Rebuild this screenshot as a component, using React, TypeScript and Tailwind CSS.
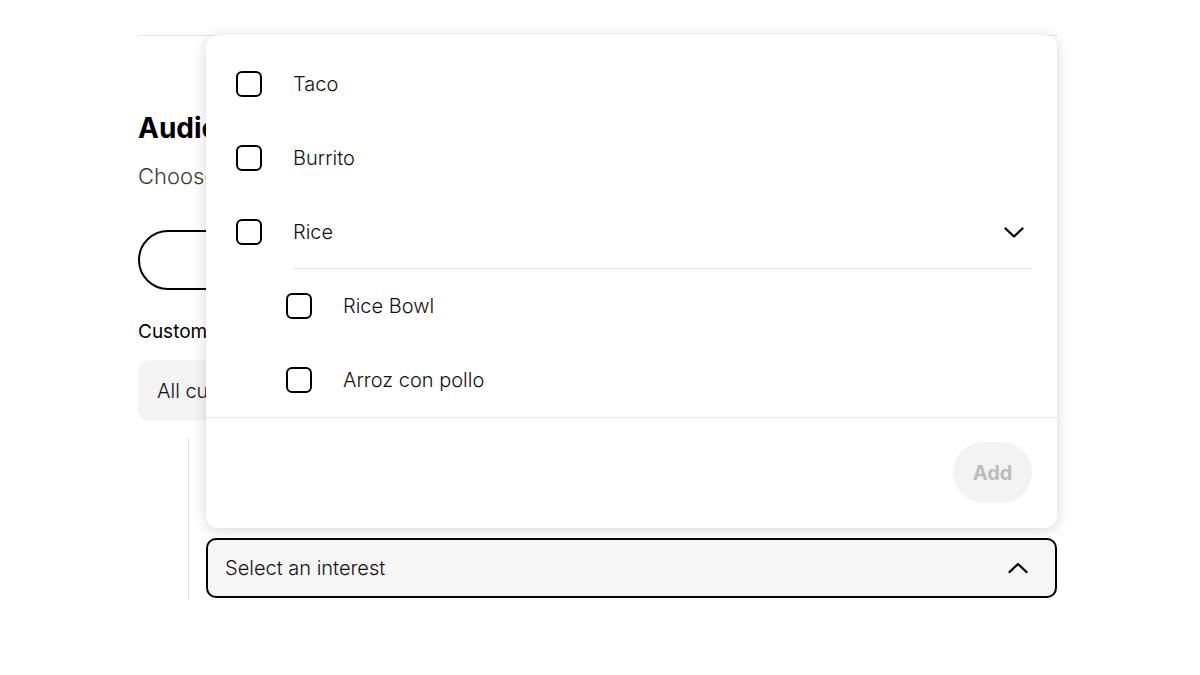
import React from "react";

function Box({ className = "" }: { className?: string }) {
  return <span className={"block w-[26px] h-[26px] rounded-[6px] border-[2.5px] border-black bg-white shrink-0 " + className} />;
}

function ChevronDown() {
  return (
    <svg width="24" height="24" viewBox="0 0 24 24" fill="none" stroke="black" strokeWidth="2.3" strokeLinecap="round" strokeLinejoin="round">
      <path d="M3.5 8.5l8.5 8 8.5-8" />
    </svg>
  );
}

function ChevronUp() {
  return (
    <svg width="24" height="24" viewBox="0 0 24 24" fill="none" stroke="black" strokeWidth="2.3" strokeLinecap="round" strokeLinejoin="round">
      <path d="M3.5 16l8.5-8 8.5 8" />
    </svg>
  );
}

function Row({ label, indent = false, chevron = false, divider = false }: { label: string; indent?: boolean; chevron?: boolean; divider?: boolean }) {
  return (
    <div className={"flex items-center h-[74px] " + (indent ? "pl-[80px]" : "pl-[30px]")}>
      <Box />
      <div className={"flex items-center h-full flex-1 ml-[31px] mr-[25px] " + (divider ? "border-b border-[#e4e4e4]" : "")}>
        <span className="text-[20px] font-light text-[#111] flex-1">{label}</span>
        {chevron && (
          <span className="mr-[6px] mt-[1px]"><ChevronDown /></span>
        )}
      </div>
    </div>
  );
}

export default function App() {
  return (
    <div className="min-h-[675px] bg-white" style={{ fontFamily: "Inter, 'Noto Sans', sans-serif" }}>
      <div className="ml-[138px] w-[919px] pt-[35px]">
        <div className="border-t border-[#e6e6e6]" />
        <h1 className="mt-[74px] text-[28px] leading-[36px] font-bold text-black">Audience</h1>
        <p className="mt-[16px] text-[22px] leading-[28px] font-light text-[#3a3a3a]">Choose who will see this campaign</p>
        <button className="mt-[40px] w-full h-[60px] rounded-full border-2 border-black bg-white text-[18px] font-semibold">Add audience</button>
        <div className="mt-[30px] text-[19px] leading-[24px] font-normal text-black">Customers</div>
        <div className="mt-[16px] h-[61px] rounded-xl bg-[#f4f4f4] flex items-center px-[19px] text-[20px] font-light text-[#111]">All customers</div>
        <div className="mt-[17px] ml-[50px] border-l border-[#e2e2e2] pl-[17px] h-[162px] flex flex-col justify-end pb-[2px]">
          <div className="relative">
            <div className="absolute left-0 right-0 bottom-full mb-[10px] bg-white rounded-[12px] shadow-[0_2px_14px_rgba(0,0,0,0.16)] overflow-hidden">
              <div className="pt-[12px]">
                <Row label="Taco" />
                <Row label="Burrito" />
                <Row label="Rice" chevron divider />
                <Row label="Rice Bowl" indent />
                <Row label="Arroz con pollo" indent />
              </div>
              <div className="border-t border-[#e8e8e8] flex justify-end pt-[24px] pb-[25px] pr-[25px]">
                <button className="h-[61px] w-[79px] rounded-full bg-[#f3f3f3] text-[20px] font-bold text-[#bcbcbc]">Add</button>
              </div>
            </div>
            <div className="h-[60px] rounded-[10px] border-2 border-black bg-[#f6f6f6] flex items-center pl-[17px] pr-[25px]">
              <span className="flex-1 text-[20px] font-light text-[#111]">Select an interest</span>
              <ChevronUp />
            </div>
          </div>
        </div>
      </div>
    </div>
  );
}
